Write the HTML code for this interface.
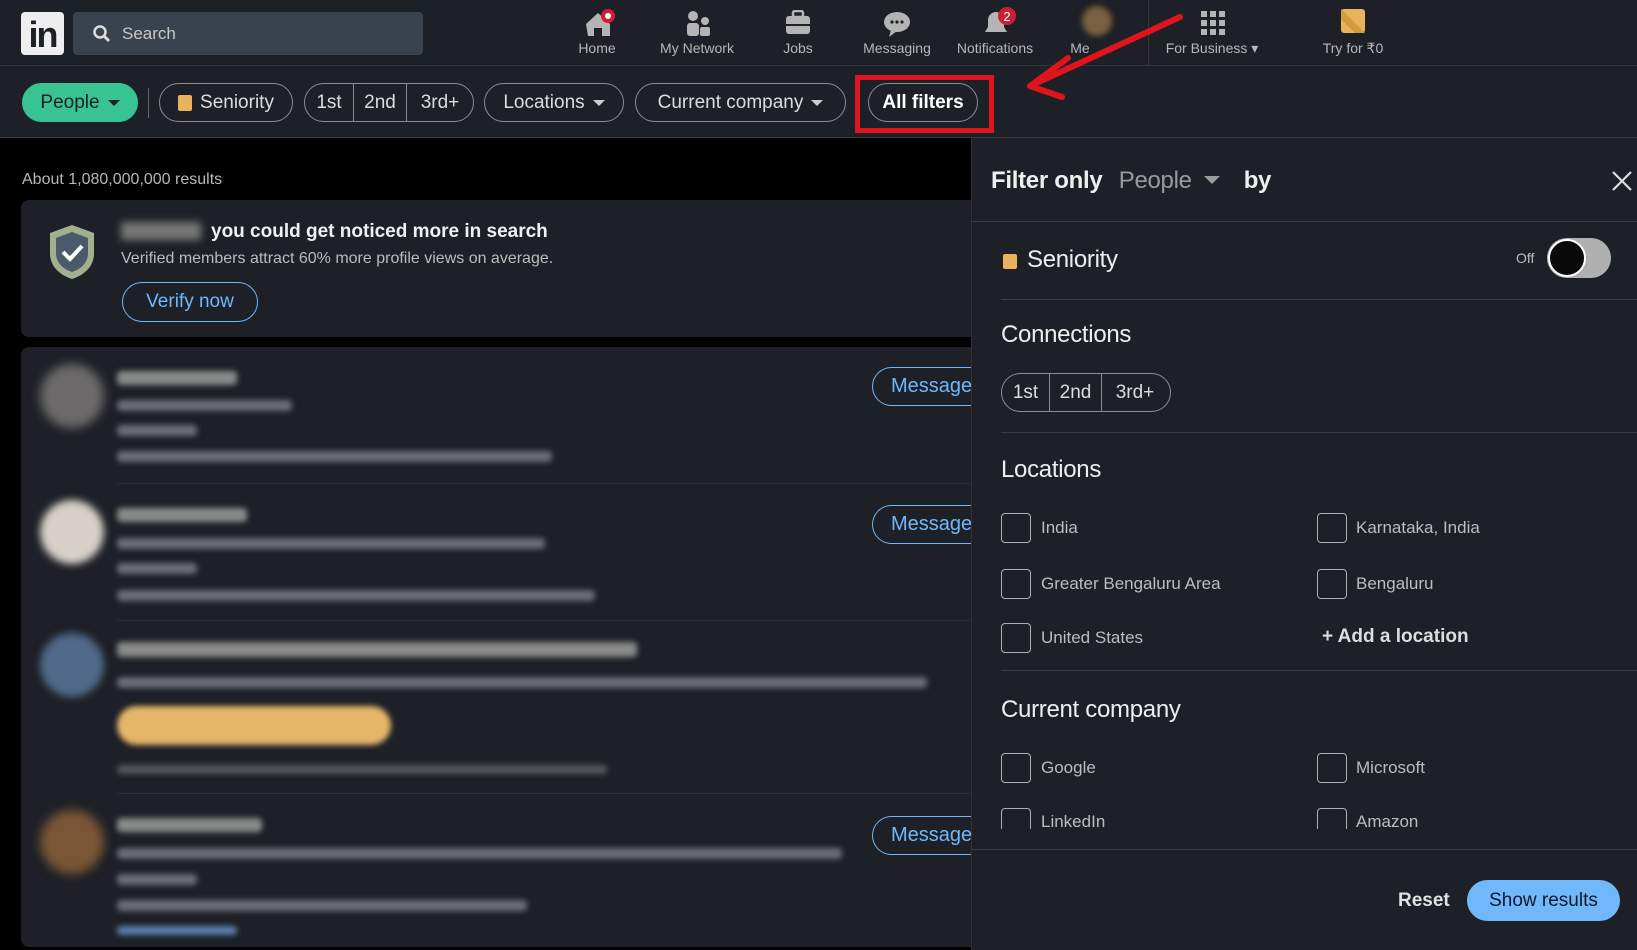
<!DOCTYPE html>
<html><head><meta charset="utf-8"><style>
*{box-sizing:border-box;margin:0;padding:0}
body{width:1637px;height:950px;overflow:hidden;background:#000;font-family:"Liberation Sans",Arial,sans-serif;position:relative;color:#e8e8e8}
.a{position:absolute}
.hdr{left:0;top:0;width:1637px;height:66px;background:#1d2026;border-bottom:1px solid #33373d}
.fb{left:0;top:66px;width:1637px;height:72px;background:#1d2026;border-bottom:1px solid #383c42}
.nl{font-size:14px;color:#b8b8b8;transform:translateX(-50%);top:40px;white-space:nowrap}
.pill{top:83px;height:39px;border:1px solid #8a8d91;border-radius:20px;color:#dcdcdc;font-size:19px;display:flex;align-items:center;justify-content:center}
.tri{display:inline-block;width:0;height:0;border-left:6px solid transparent;border-right:6px solid transparent;border-top:6px solid #ccc;margin-left:8px}
.card{background:#1d2026;border-radius:8px}
.bl{background:#6b6f75;border-radius:4px;filter:blur(3px);height:11px}
.msg{height:39px;border:1.5px solid #71b7fb;border-radius:20px 0 0 20px;border-right:none;color:#71b7fb;font-size:20px;padding-left:18px;line-height:36px;width:99px;overflow:hidden}
.panel{left:971px;top:138px;width:666px;height:812px;background:#1d2026;border-left:1px solid #2e3238}
.h2{font-size:24px;color:#eee;font-weight:bold;letter-spacing:-0.3px}
.hr{height:1px;background:#3a3e44}
.cb{width:30px;height:30px;border:1.5px solid #b0b0b0;border-radius:4px}
.lb{font-size:17px;color:#bdbdbd}
</style></head><body>
<div class="a hdr"></div>
<div class="a" style="left:21px;top:12px;width:43px;height:43px;background:#eee;border-radius:4px;color:#1d2026;font-weight:bold;font-size:36px;line-height:46px;text-align:center;letter-spacing:-2px">in</div>
<div class="a" style="left:73px;top:12px;width:350px;height:43px;background:#38434f;border-radius:4px"></div>
<svg class="a" style="left:92px;top:24px" width="20" height="20" viewBox="0 0 20 20"><circle cx="8" cy="8" r="5.5" fill="none" stroke="#ddd" stroke-width="2.5"/><path d="M12 12l5 5" stroke="#ddd" stroke-width="3"/></svg>
<div class="a" style="left:122px;top:24px;font-size:17px;color:#c8c8c8">Search</div>
<!-- nav icons -->
<svg class="a" style="left:584px;top:8px" width="36" height="30"><path d="M2 16L14 5l12 11v12h-8v-8h-8v8H4z" fill="#b4b4b4"/><circle cx="24" cy="8" r="7" fill="#cc1f34"/><circle cx="24" cy="8" r="3" fill="#fff"/></svg>
<div class="a nl" style="left:597px">Home</div>
<svg class="a" style="left:684px;top:10px" width="28" height="28"><circle cx="9" cy="6" r="5" fill="#b4b4b4"/><rect x="3" y="13" width="12" height="13" rx="3" fill="#b4b4b4"/><circle cx="21" cy="11" r="4" fill="#b4b4b4"/><rect x="16" y="17" width="10" height="9" rx="2" fill="#b4b4b4"/></svg>
<div class="a nl" style="left:697px">My Network</div>
<svg class="a" style="left:784px;top:10px" width="28" height="26"><rect x="9" y="1" width="10" height="6" rx="2" fill="none" stroke="#b4b4b4" stroke-width="2.5"/><rect x="2" y="6" width="24" height="18" rx="3" fill="#b4b4b4"/><rect x="2" y="14" width="24" height="2" fill="#1d2026"/></svg>
<div class="a nl" style="left:798px">Jobs</div>
<svg class="a" style="left:883px;top:10px" width="28" height="28"><ellipse cx="14" cy="12" rx="13" ry="10" fill="#b4b4b4"/><path d="M8 20l-2 7 8-6z" fill="#b4b4b4"/><circle cx="9" cy="12" r="1.6" fill="#1d2026"/><circle cx="14" cy="12" r="1.6" fill="#1d2026"/><circle cx="19" cy="12" r="1.6" fill="#1d2026"/></svg>
<div class="a nl" style="left:897px">Messaging</div>
<svg class="a" style="left:981px;top:6px" width="40" height="32"><path d="M4 26h22l-3-5V14a8 8 0 0 0-16 0v7z" fill="#b4b4b4"/><circle cx="26" cy="10" r="9" fill="#cc1f34"/><text x="26" y="15" font-size="13" fill="#fff" text-anchor="middle" font-family="Liberation Sans">2</text></svg>
<div class="a nl" style="left:995px">Notifications</div>
<div class="a" style="left:1082px;top:6px;width:30px;height:30px;border-radius:50%;background:#7a6040;filter:blur(3px)"></div>
<div class="a nl" style="left:1080px">Me</div>
<div class="a" style="left:1148px;top:0;width:1px;height:66px;background:#33373d"></div>
<svg class="a" style="left:1200px;top:10px" width="26" height="26"><g fill="#b4b4b4"><rect x="1" y="1" width="6" height="6"/><rect x="10" y="1" width="6" height="6"/><rect x="19" y="1" width="6" height="6"/><rect x="1" y="10" width="6" height="6"/><rect x="10" y="10" width="6" height="6"/><rect x="19" y="10" width="6" height="6"/><rect x="1" y="19" width="6" height="6"/><rect x="10" y="19" width="6" height="6"/><rect x="19" y="19" width="6" height="6"/></g></svg>
<div class="a nl" style="left:1212px">For Business ▾</div>
<svg class="a" style="left:1341px;top:9px" width="24" height="24"><rect width="24" height="24" rx="3" fill="#e8b35a"/><path d="M0 0L24 24H14L0 10z" fill="#d49a3e"/></svg>
<div class="a nl" style="left:1353px">Try for ₹0</div>
<!-- filter bar -->
<div class="a fb"></div>
<div class="a pill" style="left:22px;width:116px;background:#38c393;border-color:#38c393;color:#1d2026;font-weight:normal">People<span class="tri" style="border-top-color:#1d2026"></span></div>
<div class="a" style="left:148px;top:88px;width:1px;height:30px;background:#666"></div>
<div class="a pill" style="left:159px;width:134px"><span style="display:inline-block;width:14px;height:16px;background:#e8b35a;border-radius:2px;margin-right:8px"></span>Seniority</div>
<div class="a pill" style="left:304px;width:170px;justify-content:flex-start"><span style="width:48px;text-align:center">1st</span><span style="width:54px;text-align:center;border-left:1px solid #8a8d91;border-right:1px solid #8a8d91;height:37px;line-height:37px">2nd</span><span style="width:66px;text-align:center">3rd+</span></div>
<div class="a pill" style="left:484px;width:140px">Locations<span class="tri"></span></div>
<div class="a pill" style="left:635px;width:211px">Current company<span class="tri"></span></div>
<div class="a pill" style="left:868px;width:110px;color:#fff;font-weight:bold">All filters</div>
<div class="a" style="left:855px;top:75px;width:139px;height:58px;border:5px solid #e0141c"></div>
<svg class="a" style="left:0;top:0;pointer-events:none" width="1637" height="140"><path d="M1180 17L1030 86M1030 86L1068 58M1030 86L1062 97" stroke="#e0141c" stroke-width="6" fill="none" stroke-linecap="round"/></svg>
<!-- left content -->
<div class="a" style="left:22px;top:171px;font-size:16px;color:#b8b8b8">About 1,080,000,000 results</div>
<div class="a card" style="left:21px;top:200px;width:960px;height:137px"></div>
<svg class="a" style="left:46px;top:223px" width="52" height="58" viewBox="0 0 52 58"><path d="M26 2L48 10v20c0 14-10 22-22 26C14 52 4 44 4 30V10z" fill="#a3b08e"/><path d="M26 9L42 15v15c0 10-7 16-16 19C17 46 10 40 10 30V15z" fill="#4b5a6b"/><path d="M17 29l7 7 12-13" stroke="#fff" stroke-width="4" fill="none"/></svg>
<div class="a" style="left:121px;top:222px;width:80px;height:18px;background:#777;filter:blur(4px)"></div>
<div class="a" style="left:211px;top:221px;font-size:19px;color:#f0f0f0;font-weight:bold">you could get noticed more in search</div>
<div class="a" style="left:121px;top:250px;font-size:16px;color:#bcbcbc">Verified members attract 60% more profile views on average.</div>
<div class="a" style="left:122px;top:282px;width:136px;height:40px;border:1.5px solid #71b7fb;border-radius:20px;color:#71b7fb;font-size:19px;text-align:center;line-height:37px">Verify now</div>
<div class="a card" style="left:21px;top:347px;width:960px;height:600px"></div>
<!-- row 1 -->
<div class="a" style="left:40px;top:364px;width:64px;height:64px;border-radius:50%;background:#6c6a6a;filter:blur(5px)"></div>
<div class="a bl" style="left:117px;top:371px;width:120px;height:14px;background:#8a8a8a"></div>
<div class="a bl" style="left:117px;top:400px;width:175px"></div>
<div class="a bl" style="left:117px;top:425px;width:80px"></div>
<div class="a bl" style="left:117px;top:451px;width:435px"></div>
<div class="a msg" style="left:872px;top:367px">Message</div>
<div class="a hr" style="left:117px;top:483px;width:854px;background:#2c3036"></div>
<!-- row 2 -->
<div class="a" style="left:40px;top:500px;width:64px;height:64px;border-radius:50%;background:#d6d0c8;filter:blur(4px)"></div>
<div class="a bl" style="left:117px;top:508px;width:130px;height:14px;background:#8a8a8a"></div>
<div class="a bl" style="left:117px;top:538px;width:428px"></div>
<div class="a bl" style="left:117px;top:563px;width:80px"></div>
<div class="a bl" style="left:117px;top:590px;width:478px"></div>
<div class="a msg" style="left:872px;top:505px">Message</div>
<div class="a hr" style="left:117px;top:620px;width:854px;background:#2c3036"></div>
<!-- row 3 -->
<div class="a" style="left:40px;top:633px;width:64px;height:64px;border-radius:50%;background:#506a88;filter:blur(4px)"></div>
<div class="a bl" style="left:117px;top:642px;width:520px;height:15px;background:#8a8a8a"></div>
<div class="a bl" style="left:117px;top:677px;width:810px"></div>
<div class="a" style="left:117px;top:706px;width:274px;height:39px;border-radius:20px;background:#e5b66a;filter:blur(3px)"></div>
<div class="a bl" style="left:117px;top:765px;width:490px;height:9px;background:#55585d"></div>
<div class="a hr" style="left:117px;top:793px;width:854px;background:#2c3036"></div>
<!-- row 4 -->
<div class="a" style="left:40px;top:810px;width:64px;height:64px;border-radius:50%;background:#7a5636;filter:blur(5px)"></div>
<div class="a bl" style="left:117px;top:818px;width:145px;height:14px;background:#8a8a8a"></div>
<div class="a bl" style="left:117px;top:848px;width:725px"></div>
<div class="a bl" style="left:117px;top:874px;width:80px"></div>
<div class="a bl" style="left:117px;top:900px;width:410px"></div>
<div class="a bl" style="left:117px;top:926px;width:120px;height:9px;background:#5a7fb0"></div>
<div class="a msg" style="left:872px;top:816px">Message</div>
<!-- panel -->
<div class="a panel"></div>
<div class="a h2" style="left:991px;top:167px">Filter only <span style="color:#9a9a9a;font-weight:normal;margin-left:10px">People</span><span class="tri" style="border-top-color:#9a9a9a;border-left-width:8px;border-right-width:8px;border-top-width:8px;margin:0 24px 4px 12px"></span>by</div>
<svg class="a" style="left:1611px;top:170px" width="22" height="22"><path d="M2 2L20 20M20 2L2 20" stroke="#ddd" stroke-width="2.2"/></svg>
<div class="a hr" style="left:971px;top:221px;width:666px"></div>
<div class="a" style="left:1003px;top:254px;width:14px;height:15px;background:#e8b35a;border-radius:2px"></div>
<div class="a h2" style="left:1027px;top:246px;font-weight:normal">Seniority</div>
<div class="a" style="left:1516px;top:250px;font-size:14px;color:#bbb">Off</div>
<div class="a" style="left:1547px;top:238px;width:64px;height:40px;border-radius:20px;background:#b0b0b0"></div>
<div class="a" style="left:1548px;top:239px;width:38px;height:38px;border-radius:50%;background:#0a0a0a;border:2px solid #fff"></div>
<div class="a hr" style="left:1001px;top:299px;width:636px"></div>
<div class="a h2" style="left:1001px;top:321px;font-weight:normal">Connections</div>
<div class="a pill" style="left:1001px;top:373px;width:170px;justify-content:flex-start;font-size:19px"><span style="width:47px;text-align:center">1st</span><span style="width:53px;text-align:center;border-left:1px solid #8a8d91;border-right:1px solid #8a8d91;height:37px;line-height:37px">2nd</span><span style="width:66px;text-align:center">3rd+</span></div>
<div class="a hr" style="left:1001px;top:432px;width:636px"></div>
<div class="a h2" style="left:1001px;top:456px;font-weight:normal">Locations</div>
<div class="a cb" style="left:1001px;top:513px"></div><div class="a lb" style="left:1041px;top:518px">India</div>
<div class="a cb" style="left:1317px;top:513px"></div><div class="a lb" style="left:1356px;top:518px">Karnataka, India</div>
<div class="a cb" style="left:1001px;top:569px"></div><div class="a lb" style="left:1041px;top:574px">Greater Bengaluru Area</div>
<div class="a cb" style="left:1317px;top:569px"></div><div class="a lb" style="left:1356px;top:574px">Bengaluru</div>
<div class="a cb" style="left:1001px;top:623px"></div><div class="a lb" style="left:1041px;top:628px">United States</div>
<div class="a" style="left:1322px;top:626px;font-size:19px;color:#ddd;font-weight:bold">+ Add a location</div>
<div class="a hr" style="left:1001px;top:670px;width:636px"></div>
<div class="a h2" style="left:1001px;top:696px;font-weight:normal">Current company</div>
<div class="a cb" style="left:1001px;top:753px"></div><div class="a lb" style="left:1041px;top:758px">Google</div>
<div class="a cb" style="left:1317px;top:753px"></div><div class="a lb" style="left:1356px;top:758px">Microsoft</div>
<div class="a" style="left:1000px;top:808px;width:637px;height:21px;overflow:hidden">
<div class="a cb" style="left:1px;top:0"></div><div class="a lb" style="left:41px;top:4px">LinkedIn</div>
<div class="a cb" style="left:317px;top:0"></div><div class="a lb" style="left:356px;top:4px">Amazon</div></div>
<div class="a hr" style="left:971px;top:849px;width:666px"></div>
<div class="a" style="left:1398px;top:890px;font-size:19px;color:#e0e0e0;font-weight:bold">Reset</div>
<div class="a" style="left:1467px;top:880px;width:153px;height:41px;border-radius:21px;background:#71b7fb;color:#0d1a2a;font-size:19px;text-align:center;line-height:41px">Show results</div>
</body></html>
